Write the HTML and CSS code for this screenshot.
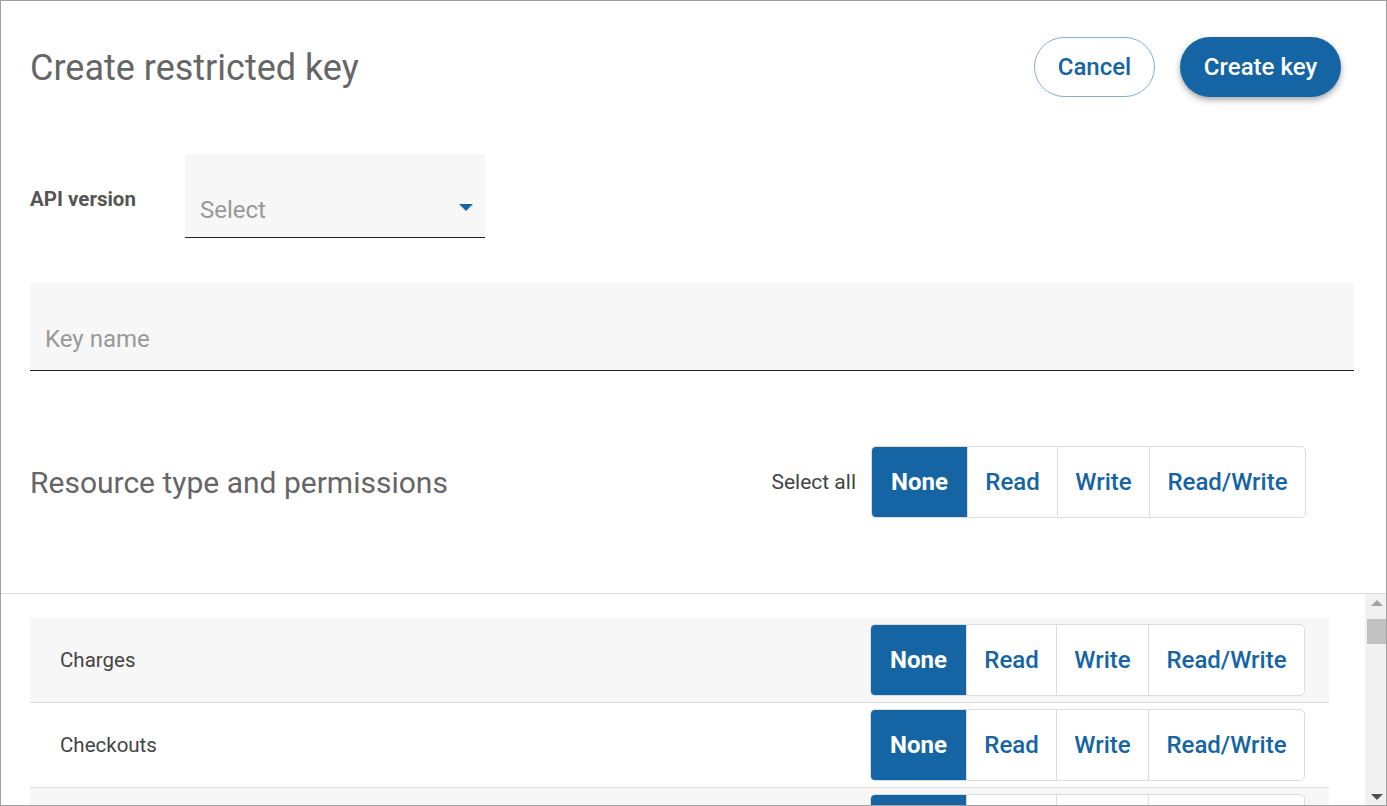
FILE: index.html
```html
<!DOCTYPE html>
<html>
<head>
<meta charset="utf-8">
<link rel="stylesheet" href="styles.css">
</head>
<body>
<div class="page">
  <div class="top">
    <div class="header">
      <h1 class="title">Create restricted key</h1>
      <div class="actions">
        <button class="btn btn-outline">Cancel</button>
        <button class="btn btn-primary">Create key</button>
      </div>
    </div>
    <div class="api-row">
      <label class="api-label">API version</label>
      <div class="select-field">
        <span class="placeholder">Select</span>
        <span class="caret"></span>
      </div>
    </div>
    <div class="text-field">
      <span class="placeholder">Key name</span>
    </div>
    <div class="perm-head">
      <h2 class="subtitle">Resource type and permissions</h2>
      <div class="perm-controls">
        <span class="select-all">Select all</span>
        <div class="seg">
          <span class="seg-item s-none active">None</span>
          <span class="seg-item s-read">Read</span>
          <span class="seg-item s-write">Write</span>
          <span class="seg-item s-rw">Read/Write</span>
        </div>
      </div>
    </div>
  </div>
  <div class="bottom">
    <div class="list">
      <div class="row shaded">
        <span class="row-name">Charges</span>
        <div class="seg">
          <span class="seg-item s-none active">None</span>
          <span class="seg-item s-read">Read</span>
          <span class="seg-item s-write">Write</span>
          <span class="seg-item s-rw">Read/Write</span>
        </div>
      </div>
      <div class="row">
        <span class="row-name">Checkouts</span>
        <div class="seg">
          <span class="seg-item s-none active">None</span>
          <span class="seg-item s-read">Read</span>
          <span class="seg-item s-write">Write</span>
          <span class="seg-item s-rw">Read/Write</span>
        </div>
      </div>
      <div class="row shaded">
        <span class="row-name">Coupons</span>
        <div class="seg">
          <span class="seg-item s-none active">None</span>
          <span class="seg-item s-read">Read</span>
          <span class="seg-item s-write">Write</span>
          <span class="seg-item s-rw">Read/Write</span>
        </div>
      </div>
    </div>
    <div class="scrollbar">
      <span class="arrow up"></span>
      <div class="track"><div class="thumb"></div></div>
      <span class="arrow down"></span>
    </div>
  </div>
</div>
</body>
</html>
```

FILE: styles.css
```css
* { box-sizing: border-box; }
html, body { margin: 0; padding: 0; }
body {
  font-family: Roboto, "Liberation Sans", sans-serif;
  background: #fff;
  color: #444;
}
.page {
  width: 1387px;
  height: 806px;
  border: 1px solid #a0a0a0;
  display: flex;
  flex-direction: column;
  overflow: hidden;
}
.top {
  padding: 36px 32px 0 29px;
  border-bottom: 1px solid #dcdcdc;
  height: 593px;
  flex-shrink: 0;
}
.header {
  display: flex;
  justify-content: space-between;
  align-items: center;
  height: 60px;
  padding-right: 13px;
}
.title {
  margin: 0;
  font-size: 36px;
  font-weight: 400;
  color: #666;
  padding-top: 2px;
}
.actions { display: flex; gap: 25px; }
.btn {
  font-family: Roboto, "Liberation Sans", sans-serif;
  height: 60px;
  border-radius: 30px;
  font-size: 24px;
  font-weight: 500;
  cursor: pointer;
  padding: 0;
}
.btn-outline {
  width: 121px;
  background: #fff;
  color: #1565a4;
  border: 1px solid #86acd0;
}
.btn-primary {
  width: 161px;
  background: #1565a4;
  color: #fff;
  border: none;
  box-shadow: 0 3px 6px rgba(0,0,0,0.35);
}
.api-row {
  display: flex;
  align-items: center;
  margin-top: 57px;
}
.api-label {
  width: 155px;
  font-size: 20.5px;
  font-weight: 700;
  color: #555;
  margin-top: 6px;
}
.select-field {
  width: 300px;
  height: 84px;
  background: #f7f7f7;
  border-bottom: 1px solid #222;
  display: flex;
  align-items: center;
  justify-content: space-between;
  padding: 28px 12px 0 15px;
}
.placeholder {
  font-size: 24px;
  color: #999;
}
.caret {
  width: 0;
  height: 0;
  border-left: 7px solid transparent;
  border-right: 7px solid transparent;
  border-top: 7px solid #1565a4;
  margin-top: -4px;
}
.text-field {
  margin-top: 45px;
  height: 88px;
  background: #f7f7f7;
  border-bottom: 1px solid #222;
  display: flex;
  align-items: center;
  padding: 24px 15px 0 15px;
}
.perm-head {
  margin-top: 75px;
  display: flex;
  justify-content: space-between;
  align-items: center;
  padding-right: 48px;
}
.subtitle {
  margin: 0;
  font-size: 30px;
  font-weight: 400;
  color: #666;
}
.perm-controls {
  display: flex;
  align-items: center;
  gap: 15px;
}
.select-all {
  font-size: 21px;
  color: #444;
}
.seg {
  display: flex;
  height: 72px;
  border: 1px solid #dcdcdc;
  border-radius: 5px;
  overflow: hidden;
  background: #fff;
}
.seg-item {
  display: flex;
  align-items: center;
  justify-content: center;
  font-size: 24px;
  font-weight: 500;
  color: #1565a4;
  border-left: 1px solid #dcdcdc;
  white-space: nowrap;
}
.seg-item:first-child { border-left: none; }
.s-none { width: 95px; }
.s-read { width: 90px; }
.s-write { width: 92px; }
.s-rw { width: 156px; }
.seg-item.active {
  background: #1565a4;
  color: #fff;
  font-weight: 700;
}
.bottom {
  flex: 1;
  display: flex;
  min-height: 0;
}
.list {
  flex: 1;
  padding: 24px 36px 0 29px;
  overflow: hidden;
}
.row {
  height: 85px;
  display: flex;
  align-items: center;
  justify-content: space-between;
  padding: 0 24px 0 30px;
  border-bottom: 1px solid #dcdcdc;
}
.row.shaded { background: #f7f7f7; }
.row-name {
  font-size: 20.5px;
  color: #444;
}
.scrollbar {
  width: 21px;
  flex-shrink: 0;
  background: #f1f1f1;
  display: flex;
  flex-direction: column;
}
.arrow {
  height: 17px;
  width: 100%;
  display: flex;
  align-items: center;
  justify-content: center;
  flex-shrink: 0;
  padding-left: 2px;
}
.arrow.up::before {
  content: "";
  border-left: 6px solid transparent;
  border-right: 6px solid transparent;
  border-bottom: 6px solid #a3a3a3;
}
.arrow.down::before {
  content: "";
  border-left: 6px solid transparent;
  border-right: 6px solid transparent;
  border-top: 6px solid #505050;
}
.track {
  flex: 1;
  width: 100%;
  padding-left: 2px;
}
.thumb {
  height: 25px;
  background: #c1c1c1;
  margin-top: 8px;
}
```
